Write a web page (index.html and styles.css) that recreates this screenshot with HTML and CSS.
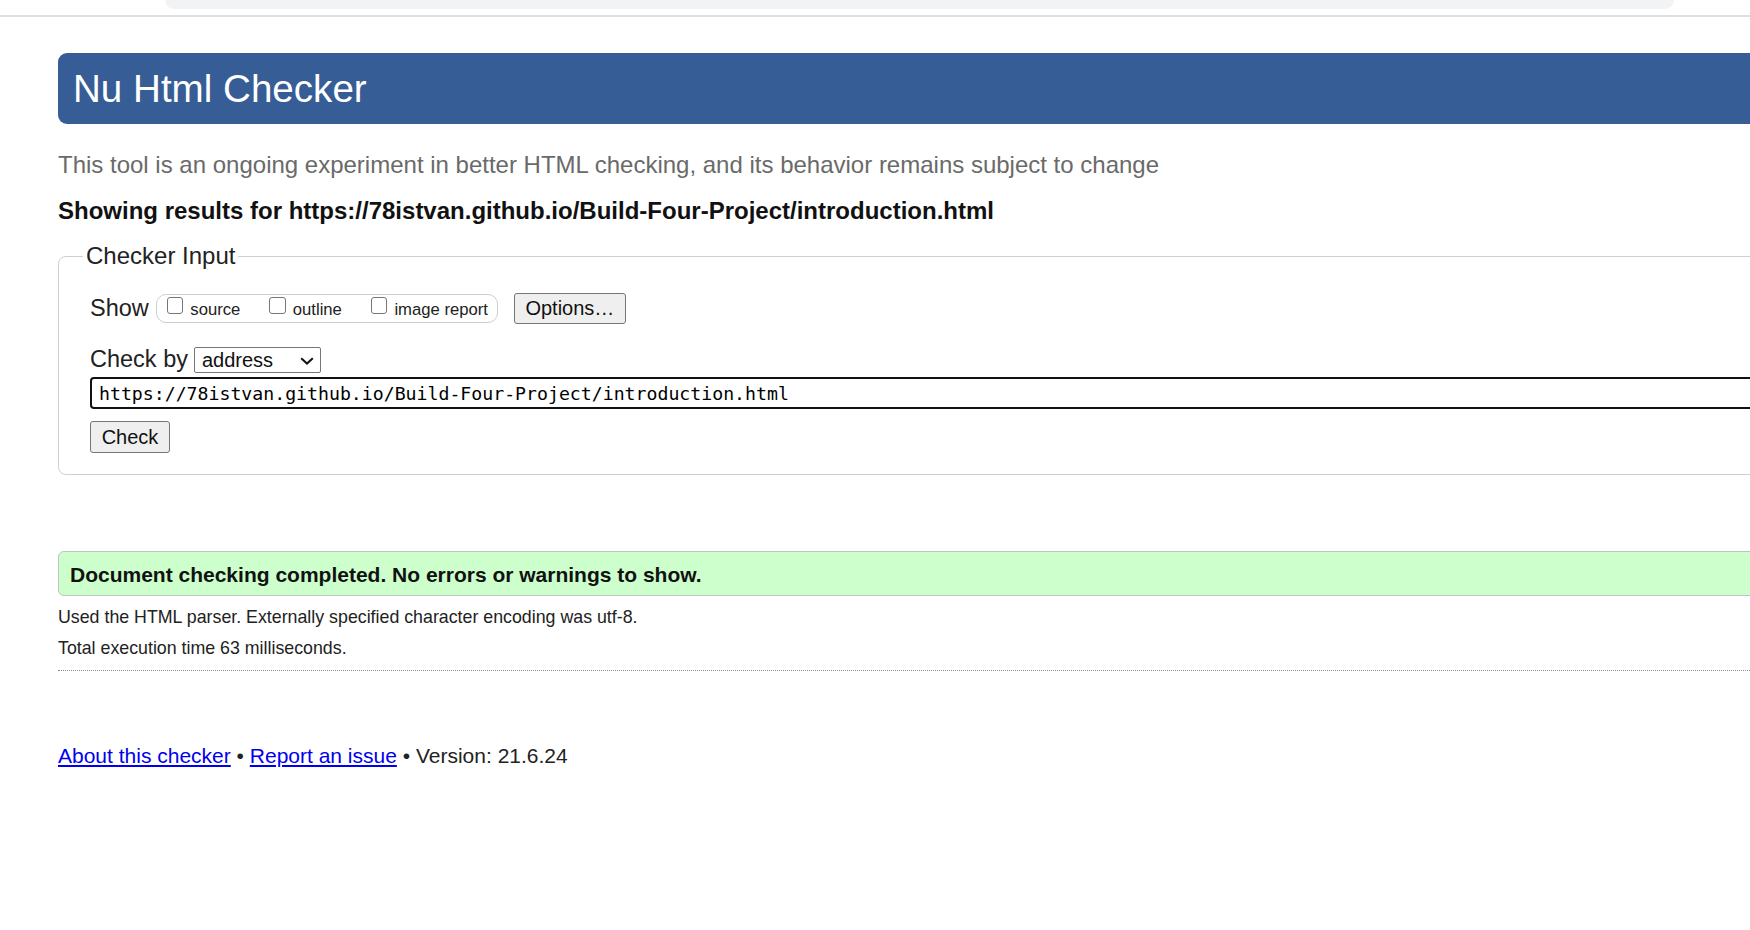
FILE: index.html
```html
<!DOCTYPE html>
<html lang="en">
<head>
<meta charset="utf-8">
<title>Showing results for https://78istvan.github.io/Build-Four-Project/introduction.html - Nu Html Checker</title>
<link rel="stylesheet" href="styles.css">
</head>
<body>
<div class="chrome"><div class="omnibox"></div></div>
<div class="page">
  <h1 class="title">Nu Html Checker</h1>
  <p class="lead">This tool is an ongoing experiment in better HTML checking, and its behavior remains subject to change</p>
  <p class="results">Showing results for https://78istvan.github.io/Build-Four-Project/introduction.html</p>

  <fieldset class="checker">
    <legend class="checker-legend">Checker Input</legend>
    <div class="show-row">
      <span class="label">Show</span>
      <div class="opts">
        <label class="opt"><span class="box"></span><span class="opt-text">source</span></label>
        <label class="opt"><span class="box"></span><span class="opt-text">outline</span></label>
        <label class="opt last"><span class="box"></span><span class="opt-text">image report</span></label>
      </div>
      <button class="btn btn-options" type="button">Options…</button>
    </div>
    <div class="by-row">
      <span class="label label-by">Check by</span>
      <span class="select"><span class="select-text">address</span><svg class="chev" width="14" height="8" viewBox="0 0 14 8"><path d="M1.2 1.2 L7 6.6 L12.8 1.2" fill="none" stroke="#111" stroke-width="2"/></svg></span>
    </div>
    <div class="url">https://78istvan.github.io/Build-Four-Project/introduction.html</div>
    <button class="btn btn-check" type="button">Check</button>
  </fieldset>

  <div class="success">Document checking completed. No errors or warnings to show.</div>
  <p class="meta">Used the HTML parser. Externally specified character encoding was utf-8.</p>
  <p class="meta">Total execution time 63 milliseconds.</p>
  <hr class="rule">
  <p class="footer"><a href="#">About this checker</a> • <a href="#">Report an issue</a> • Version: 21.6.24</p>
</div>
</body>
</html>
```

FILE: styles.css
```css
html, body {
  margin: 0;
  padding: 0;
  background: #fff;
}
body {
  overflow: hidden;
  width: 1750px;
  height: 930px;
  font-family: "Liberation Sans", Arial, sans-serif;
  color: #222;
}
.chrome {
  height: 15px;
  border-bottom: 2px solid #dfdfe2;
}
.omnibox {
  margin-left: 165px;
  width: 1509px;
  height: 9px;
  background: #f1f3f4;
  border-radius: 0 0 12px 12px;
}
.page {
  width: 1800px;
  padding-left: 58px;
}
.title {
  margin: 36px 0 0;
  height: 71px;
  line-height: 71px;
  padding-left: 15px;
  background: #365d95;
  color: #fff;
  font-size: 38.6px;
  font-weight: normal;
  border-radius: 9px 0 0 9px;
}
.lead {
  margin: 27px 0 0;
  font-size: 24px;
  line-height: 28px;
  color: #6a6a6a;
}
.results {
  margin: 18px 0 0;
  font-size: 24px;
  line-height: 28px;
  font-weight: bold;
  color: #111;
}
.checker {
  margin: 17px 0 0;
  padding: 0 0 21px 31px;
  border: 1px solid #cfcfcf;
  border-radius: 8px;
  min-width: 0;
}
.checker-legend {
  margin-left: -7px;
  padding: 0 3px;
  font-size: 24px;
  line-height: 28px;
  color: #222;
}
.label {
  font-size: 23.5px;
  line-height: 28px;
  color: #222;
}
.label-by {
  margin-bottom: 3px;
}
.show-row {
  margin-top: 22px;
  height: 32px;
  display: flex;
  align-items: center;
}
.opts {
  margin-left: 7px;
  box-sizing: border-box;
  height: 29px;
  display: flex;
  align-items: center;
  padding: 0 9px 0 10px;
  border: 1px solid #cfcfcf;
  border-radius: 10px;
}
.opt {
  display: flex;
  align-items: center;
  margin-right: 29px;
  font-size: 16.67px;
  color: #222;
}
.opt.last {
  margin-right: 0;
}
.box {
  box-sizing: border-box;
  width: 16.5px;
  height: 16.5px;
  border: 1px solid #767676;
  border-radius: 3px;
  background: #fff;
  margin-right: 7px;
  margin-bottom: 5px;
}
.opt-text {
  padding-top: 4px;
}
.btn {
  box-sizing: border-box;
  padding: 0;
  font-family: "Liberation Sans", Arial, sans-serif;
  font-size: 20px;
  color: #111;
  background: #efefef;
  border: 1px solid #767676;
  border-radius: 3px;
}
.btn-options {
  margin-left: 16px;
  width: 112px;
  height: 31px;
}
.by-row {
  margin-top: 22px;
  height: 28px;
  display: flex;
  align-items: center;
}
.select {
  margin-left: 6px;
  box-sizing: border-box;
  width: 127px;
  height: 26px;
  display: flex;
  align-items: center;
  justify-content: space-between;
  padding: 0 6px 0 7px;
  border: 1px solid #767676;
  border-radius: 2px;
  font-size: 20px;
  color: #111;
  background: #fff;
}
.chev {
  display: block;
  margin-top: 1px;
}
.url {
  margin-top: 3px;
  box-sizing: border-box;
  height: 32px;
  line-height: 29px;
  padding-left: 7px;
  border: 2px solid #111;
  border-radius: 4px;
  font-family: "DejaVu Sans Mono", "Liberation Mono", monospace;
  font-size: 18.2px;
  color: #000;
}
.btn-check {
  display: block;
  margin-top: 12px;
  width: 80px;
  height: 32px;
}
.success {
  margin-top: 76px;
  box-sizing: border-box;
  height: 45px;
  line-height: 45px;
  padding-left: 11px;
  background: #ccffcc;
  border: 1px solid #c2c2c2;
  border-radius: 6px;
  font-size: 21px;
  font-weight: bold;
  color: #111;
}
.meta {
  margin: 0;
  font-size: 17.8px;
  line-height: 31px;
  color: #222;
}
.success + .meta {
  margin-top: 6px;
}
.rule {
  margin: 6px 0 0;
  border: 0;
  border-top: 1px dotted #8a8a8a;
  height: 0;
}
.footer {
  margin: 73px 0 0;
  font-size: 21px;
  line-height: 24px;
  color: #222;
}
.footer a {
  color: #0000ee;
}
```
